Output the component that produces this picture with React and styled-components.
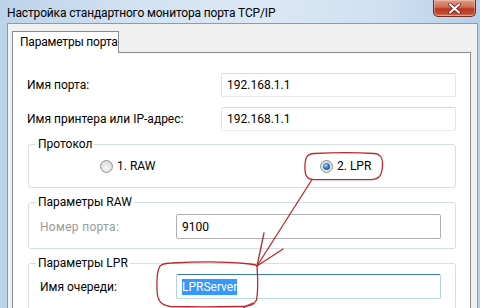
import React from 'react';
import styled, { createGlobalStyle } from 'styled-components';

const GlobalStyle = createGlobalStyle`
	html, body {
		margin: 0;
		padding: 0;
		width: 480px;
		height: 308px;
		overflow: hidden;
		background: #c9dbee;
	}
	body {
		font-family: Roboto, 'Noto Sans', sans-serif;
		font-size: 12px;
		color: #000;
	}
`;

const Window = styled.div`
	position: relative;
	width: 480px;
	height: 308px;
	overflow: hidden;
	display: flex;
	flex-direction: column;
	background: linear-gradient(90deg, #bcd3ea 0%, #d3e3f3 30%, #dbe8f5 55%, #cfe0f1 80%, #b7cfe8 100%);
`;

const TitleBar = styled.div`
	height: 23px;
	flex: none;
	display: flex;
	justify-content: space-between;
	align-items: flex-start;
	padding-left: 7px;
`;

const Title = styled.div`
	margin-top: 5px;
	line-height: 16px;
	font-size: 12px;
	letter-spacing: -0.15px;
	white-space: nowrap;
`;

const CloseButton = styled.div`
	width: 43px;
	height: 17px;
	margin-right: 4px;
	box-sizing: border-box;
	border: 1px solid #6e2d20;
	border-top: none;
	border-radius: 0 0 5px 5px;
	background: linear-gradient(180deg, #e49a86 0%, #d26c53 45%, #bb3820 55%, #c24a31 85%, #d9826a 100%);
	box-shadow: inset 0 0 0 1px rgba(255, 255, 255, 0.3);
	display: flex;
	align-items: center;
	justify-content: center;
`;

const Body = styled.div`
	flex: 1;
	margin: 0 2px 0 7px;
	border: 1px solid #8a9bb0;
	border-bottom: none;
	background: #f0f0f0;
	padding: 7px 6px 0 4px;
	display: flex;
	flex-direction: column;
`;

const TabStrip = styled.div`
	display: flex;
	height: 21px;
`;

const Tab = styled.div`
	width: 107px;
	box-sizing: border-box;
	height: 22px;
	border: 1px solid #898c95;
	border-bottom: none;
	background: #fff;
	padding-left: 7px;
	line-height: 21px;
	letter-spacing: -0.2px;
	position: relative;
	z-index: 1;
	white-space: nowrap;
`;

const Panel = styled.div`
	flex: 1;
	border: 1px solid #898c95;
	border-bottom: none;
	background: #fff;
	padding: 20px 14px 0 14px;
	display: flex;
	flex-direction: column;
`;

const FieldRow = styled.div`
	display: flex;
	align-items: center;
	margin-top: ${(p) => p.$top || 0}px;
`;

const FieldLabel = styled.div`
	width: ${(p) => p.$width}px;
	flex: none;
	white-space: nowrap;
	color: ${(p) => (p.$disabled ? '#9a9a9a' : '#000')};
	letter-spacing: ${(p) => (p.$disabled ? '0.3px' : '0')};
`;

const TextBox = styled.div`
	flex: 1;
	height: ${(p) => p.$height || 24}px;
	box-sizing: border-box;
	border: 1px solid;
	border-radius: 2px;
	border-color: ${(p) =>
		p.$state === 'disabled'
			? '#adb2b5'
			: p.$state === 'focus'
			? '#3d7bad #b5cfe7 #b7d9ed #b5cfe7'
			: '#d5d8dd #e1e4e8 #e6e9ec #e1e4e8'};
	background: #fff;
	padding-left: 5px;
	display: flex;
	align-items: center;
	white-space: nowrap;
`;

const Selected = styled.span`
	background: #3399ff;
	color: #fff;
	line-height: 16px;
`;

const Group = styled.fieldset`
	margin: ${(p) => p.$top}px 0 0 1px;
	border: 1px solid #d5dfe5;
	border-radius: 3px;
	padding: ${(p) => p.$padTop}px 14px ${(p) => p.$padBottom}px 11px;
	min-width: 0;
`;

const GroupTitle = styled.legend`
	padding: 0 2px;
	margin-left: -4px;
	line-height: 16px;
	font-size: 12px;
`;

const RadioRow = styled.div`
	display: grid;
	grid-template-columns: 220px auto;
	padding-left: 60px;
	height: 16px;
	align-items: center;
`;

const RadioOption = styled.div`
	display: flex;
	align-items: center;
	gap: 4px;
	white-space: nowrap;
`;

const RadioCircle = styled.span`
	width: 13px;
	height: 13px;
	box-sizing: border-box;
	border-radius: 50%;
	border: 1px solid #8e9194;
	background: radial-gradient(circle at 50% 60%, #f7f7f7 0%, #e2e2e2 55%, #cfcfcf 100%);
	display: flex;
	align-items: center;
	justify-content: center;
	&::after {
		content: '';
		display: ${(p) => (p.$checked ? 'block' : 'none')};
		width: 7px;
		height: 7px;
		border-radius: 50%;
		background: radial-gradient(circle at 40% 35%, #a6d6fa 0%, #2f7ac4 45%, #123f7a 100%);
	}
`;

const Overlay = styled.svg`
	position: absolute;
	left: 0;
	top: 0;
	width: 480px;
	height: 308px;
	pointer-events: none;
`;

const Radio = ({ checked, children }) => (
	<RadioOption>
		<RadioCircle $checked={checked} />
		<span>{children}</span>
	</RadioOption>
);

const App = () => {
	return (
		<>
			<GlobalStyle />
			<Window>
				<TitleBar>
					<Title>Настройка стандартного монитора порта TCP/IP</Title>
					<CloseButton>
						<svg width="13" height="11" viewBox="0 0 13 11">
							<path
								d="M2 1.5 L11 9.5 M11 1.5 L2 9.5"
								stroke="#5a1a10"
								strokeWidth="3.6"
								strokeLinecap="round"
							/>
							<path
								d="M2 1.5 L11 9.5 M11 1.5 L2 9.5"
								stroke="#fff"
								strokeWidth="2.2"
								strokeLinecap="round"
							/>
						</svg>
					</CloseButton>
				</TitleBar>
				<Body>
					<TabStrip>
						<Tab>Параметры порта</Tab>
					</TabStrip>
					<Panel>
						<FieldRow>
							<FieldLabel $width={194}>Имя порта:</FieldLabel>
							<TextBox>192.168.1.1</TextBox>
						</FieldRow>
						<FieldRow $top={10}>
							<FieldLabel $width={194}>Имя принтера или IP-адрес:</FieldLabel>
							<TextBox>192.168.1.1</TextBox>
						</FieldRow>
						<Group $top={5} $padTop={6} $padBottom={13}>
							<GroupTitle>Протокол</GroupTitle>
							<RadioRow>
								<Radio>1. RAW</Radio>
								<Radio checked>2. LPR</Radio>
							</RadioRow>
						</Group>
						<Group $top={6} $padTop={4} $padBottom={9}>
							<GroupTitle>Параметры RAW</GroupTitle>
							<FieldRow>
								<FieldLabel $width={136} $disabled>
									Номер порта:
								</FieldLabel>
								<TextBox $height={25} $state="disabled">
									9100
								</TextBox>
							</FieldRow>
						</Group>
						<Group $top={6} $padTop={3} $padBottom={20}>
							<GroupTitle>Параметры LPR</GroupTitle>
							<FieldRow>
								<FieldLabel $width={136}>Имя очереди:</FieldLabel>
								<TextBox $height={25} $state="focus">
									<Selected>LPRServer</Selected>
								</TextBox>
							</FieldRow>
						</Group>
					</Panel>
				</Body>
				<Overlay viewBox="0 0 480 308">
					<g fill="none" stroke="#c0272d" strokeWidth="1.3" strokeLinecap="round">
						<path d="M314 153.5 C 340 152, 360 152.5, 374 153.5 C 381 154, 383 158, 382.5 166 C 382 174, 380 179, 372 179.5 C 350 180, 330 179.5, 313 179.5 C 306 179, 304.5 174, 305 165 C 305.5 157, 307 154, 314 153.5 Z" />
						<path d="M312 179.5 L257 266" />
						<path d="M257 266 L264 233" />
						<path d="M257 266 L283 249" />
						<path d="M172 263 C 200 261.5, 230 262, 245 263.5 C 252 264, 256 264.5, 257 266 C 258 280, 258 292, 256.5 300 C 254 305, 250 306.5, 240 306.5 C 215 307, 190 307, 170 306.5 C 160 305, 157.5 300, 157 290 C 156.5 278, 157.5 270, 160 266 C 163 263.5, 167 263, 172 263 Z" />
						<path d="M253 303 C 247 305, 243 308, 241 310" />
					</g>
				</Overlay>
			</Window>
		</>
	);
};

export default App;
